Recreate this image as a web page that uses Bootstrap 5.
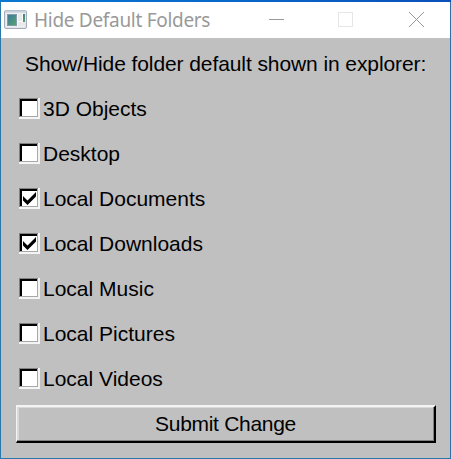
<!DOCTYPE html>
<html lang="en">
<head>
<meta charset="utf-8">
<meta name="viewport" content="width=device-width, initial-scale=1">
<title>Hide Default Folders</title>
<link href="https://cdn.jsdelivr.net/npm/bootstrap@5.3.0/dist/css/bootstrap.min.css" rel="stylesheet">
<style>
  body { font-family: "Liberation Sans", Arial, sans-serif; background: #c0c0c0; }
  .app-window {
    width: 451px; height: 459px; background: #c0c0c0; color: #000;
    border: 1px solid #2878ac; border-top: 0; border-right-color: #2d70a8;
    font-size: 21px; line-height: 45px;
  }
  .desktop-edge { height: 2px; margin: 0 -1px; background: linear-gradient(90deg, #0a78d0, #0868cc 50%, #0a50b8); }
  .title-bar { height: 36px; }
  .title-text { font-family: "Noto Sans", sans-serif; font-size: 19px; line-height: 34px; letter-spacing: -.3px; color: #999; width: 232px; margin-left: 6px; }
  .app-icon { margin-left: 3px; }
  .heading-line { height: 48px; line-height: 51px; padding-left: 24px; white-space: nowrap; letter-spacing: -.09px; }
  .option-row { height: 45px; padding-left: 18px; cursor: pointer; white-space: nowrap; }
  .option-row svg { margin-right: 3px; }
  .option-row input:not(:checked) ~ svg .tick { display: none; }
  .submit-btn {
    width: 420px; height: 38px; margin: 4px 0 0 15px; line-height: 34px; font-size: 21px; color: #000; letter-spacing: -.3px;
    background: #c0c0c0; border: 2px solid; border-color: #f4f4f4 #000 #000 #f4f4f4; border-left-width: 1px;
    box-shadow: inset -1px -1px #808080, inset 2px 1px #d9d9d9;
  }
</style>
</head>
<body class="overflow-hidden">
<main class="app-window">
  <div class="desktop-edge"></div>
  <header class="title-bar d-flex align-items-center bg-white">
    <svg class="app-icon flex-shrink-0" width="24" height="20" viewBox="0 0 24 20">
      <defs><linearGradient id="pane" x1="0" y1="0" x2="1" y2="1"><stop offset="0" stop-color="#3c789d"/><stop offset="1" stop-color="#57a56f"/></linearGradient></defs>
      <rect x=".5" y=".5" width="22" height="18" rx="1.5" fill="#e3e6e9" stroke="#a6adb8"/>
      <path d="M1 1.5h21" stroke="#c8d2df" stroke-width="2"/>
      <path d="M2.5 3.5h18v13h-18z" fill="#fafafa"/>
      <rect x="3.5" y="4.5" width="9" height="11" fill="url(#pane)" stroke="#819ca8"/>
      <rect x="14" y="4" width="4" height="7" fill="#e9e9e9"/><rect x="14" y="12" width="7" height="4" fill="#e9e9e9"/>
      <rect x="19" y="4" width="2" height="8" fill="url(#pane)"/>
    </svg>
    <span class="title-text text-nowrap">Hide Default Folders</span>
    <svg class="flex-shrink-0" width="170" height="36" viewBox="266 2 170 36" fill="none" shape-rendering="crispEdges" aria-label="Window controls">
      <path d="M269 19.5h15" stroke="#999"/>
      <path d="M338.5 12.500h14v14h-14z" stroke="#e6e6e6"/>
      <path d="M409 12l15 15M424 12l-15 15" stroke="#999" shape-rendering="auto"/>
    </svg>
  </header>

  <svg class="d-none">
    <symbol id="box" viewBox="0 0 21 21">
      <g shape-rendering="crispEdges">
        <path fill="#f4f4f4" d="M0 0h21v21H0z"/><path fill="#808080" d="M0 0h19v1H1v18H0z"/>
        <path fill="#a8a8a8" d="M1 1h18v18H1z"/><path fill="#000" d="M1 1h17v17H1z"/>
        <path fill="#fff" d="M3 3h15v15H3z"/>
      </g>
    </symbol>
    <symbol id="check" viewBox="0 0 21 21"><path d="M4 8l4.500 4.500L17 4v4.500l-8.500 8.500L4 12.500z" fill="#000"/></symbol>
  </svg>

  <form>
    <div class="heading-line">Show/Hide folder default shown in explorer:</div>
    <label class="option-row d-flex align-items-center"><input class="visually-hidden" type="checkbox"><svg width="21" height="21"><use href="#box"/><use class="tick" href="#check"/></svg>3D Objects</label>
    <label class="option-row d-flex align-items-center"><input class="visually-hidden" type="checkbox"><svg width="21" height="21"><use href="#box"/><use class="tick" href="#check"/></svg>Desktop</label>
    <label class="option-row d-flex align-items-center"><input class="visually-hidden" type="checkbox" checked><svg width="21" height="21"><use href="#box"/><use class="tick" href="#check"/></svg>Local Documents</label>
    <label class="option-row d-flex align-items-center"><input class="visually-hidden" type="checkbox" checked><svg width="21" height="21"><use href="#box"/><use class="tick" href="#check"/></svg>Local Downloads</label>
    <label class="option-row d-flex align-items-center"><input class="visually-hidden" type="checkbox"><svg width="21" height="21"><use href="#box"/><use class="tick" href="#check"/></svg>Local Music</label>
    <label class="option-row d-flex align-items-center"><input class="visually-hidden" type="checkbox"><svg width="21" height="21"><use href="#box"/><use class="tick" href="#check"/></svg>Local Pictures</label>
    <label class="option-row d-flex align-items-center"><input class="visually-hidden" type="checkbox"><svg width="21" height="21"><use href="#box"/><use class="tick" href="#check"/></svg>Local Videos</label>
    <button class="submit-btn btn rounded-0 p-0 d-block" type="button">Submit Change</button>
  </form>
</main>
<script src="https://cdn.jsdelivr.net/npm/bootstrap@5.3.0/dist/js/bootstrap.bundle.min.js"></script>
</body>
</html>
